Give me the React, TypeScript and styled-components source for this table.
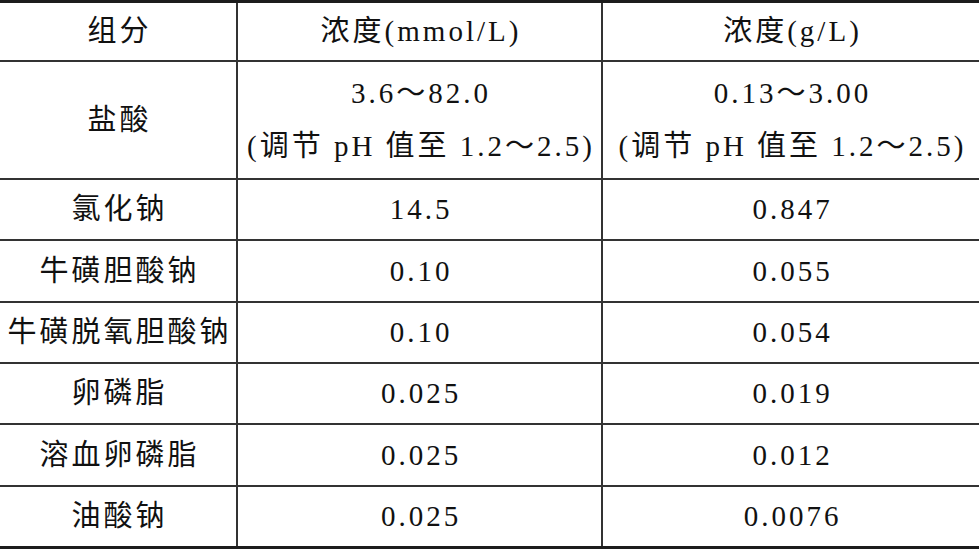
import React from 'react'
import styled, { createGlobalStyle } from 'styled-components'

const GlobalStyle = createGlobalStyle`
  html, body {
    margin: 0;
    padding: 0;
    background: #fff;
  }
  body {
    font-family: "Liberation Serif", "Noto Sans CJK SC", serif;
    color: #111;
  }
`

const Table = styled.div`
  width: 979px;
  display: grid;
  grid-template-columns: 238px 365px 1fr;
  grid-template-rows: 59px 118px 61px 62px 61px 61px 62px 59px;
  border-top: 3px solid #1c1c1c;
  border-bottom: 3px solid #1c1c1c;
`

const Cell = styled.div<{ $lastCol?: boolean; $lastRow?: boolean }>`
  display: flex;
  flex-direction: column;
  align-items: center;
  justify-content: center;
  border-right: ${p => (p.$lastCol ? 'none' : '2px solid #333')};
  border-bottom: ${p => (p.$lastRow ? 'none' : '2px solid #333')};
  font-size: 29px;
  letter-spacing: 3px;
  padding-left: 3px;
  white-space: nowrap;
  line-height: 53px;
`

const Line = styled.span`
  display: block;
`

const rows: string[][][] = [
  [['组分'], ['浓度(mmol/L)'], ['浓度(g/L)']],
  [
    ['盐酸'],
    ['3.6～82.0', '(调节 pH 值至 1.2～2.5)'],
    ['0.13～3.00', '(调节 pH 值至 1.2～2.5)'],
  ],
  [['氯化钠'], ['14.5'], ['0.847']],
  [['牛磺胆酸钠'], ['0.10'], ['0.055']],
  [['牛磺脱氧胆酸钠'], ['0.10'], ['0.054']],
  [['卵磷脂'], ['0.025'], ['0.019']],
  [['溶血卵磷脂'], ['0.025'], ['0.012']],
  [['油酸钠'], ['0.025'], ['0.0076']],
]

export default function App() {
  return (
    <>
      <GlobalStyle />
      <Table>
        {rows.map((row, r) =>
          row.map((cell, c) => (
            <Cell key={`${r}-${c}`} $lastCol={c === 2} $lastRow={r === rows.length - 1}>
              {cell.map((t, i) => (
                <Line key={i}>{t}</Line>
              ))}
            </Cell>
          ))
        )}
      </Table>
    </>
  )
}
